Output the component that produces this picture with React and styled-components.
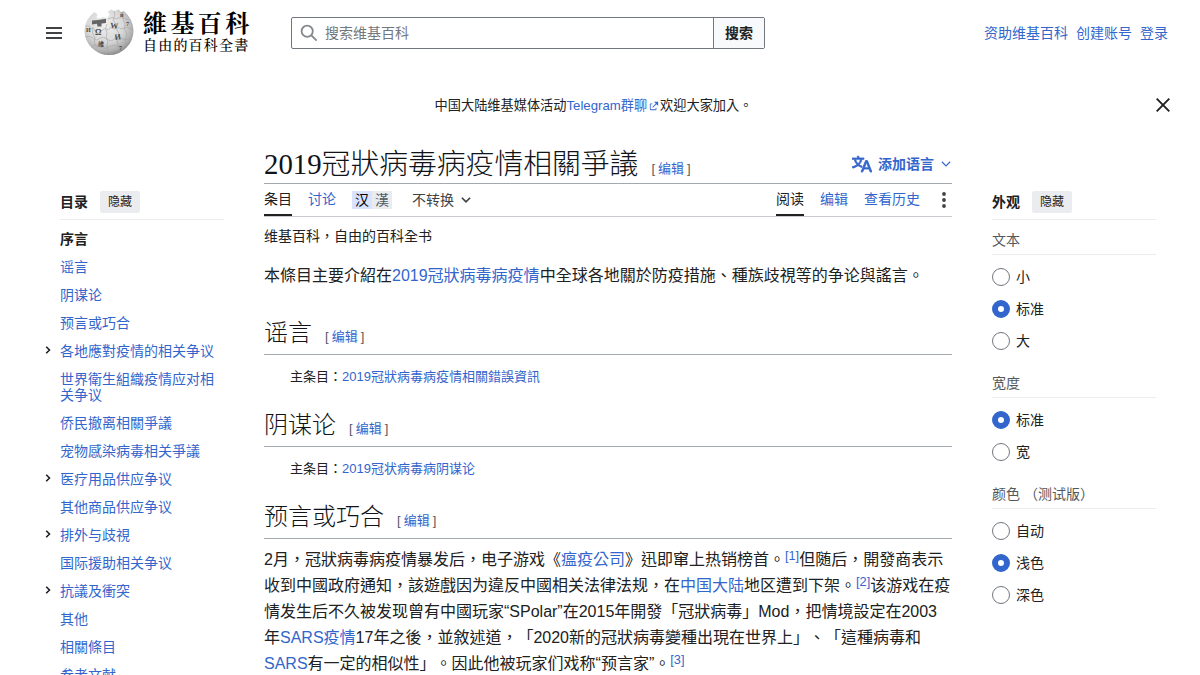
import React from "react";
import styled, { createGlobalStyle, css } from "styled-components";

const GlobalStyle = createGlobalStyle`
  * {
    box-sizing: border-box;
  }
  html, body {
    margin: 0;
    padding: 0;
    height: 675px;
    overflow: hidden;
    background: #fff;
  }
  body {
    font-family: "Liberation Sans", "Noto Sans CJK TC", sans-serif;
    font-size: 14px;
    line-height: 22px;
    color: #202122;
    text-spacing-trim: space-all;
    text-autospace: no-autospace;
  }
`;

const Link = styled.a`
  color: #36c;
  text-decoration: none;
  cursor: pointer;
`;

const Page = styled.div`
  width: 1200px;
  height: 675px;
  overflow: hidden;
`;

/* header */
const Header = styled.header`
  display: flex;
  align-items: center;
  height: 66px;
  padding: 0 32px 0 44px;
`;

const MenuButton = styled.div`
  display: flex;
  width: 20px;
  height: 20px;
  margin-right: 20px;
`;

const Brand = styled.div`
  display: flex;
  align-items: center;
  width: 207px;
  padding-bottom: 4px;
`;

const BrandText = styled.div`
  display: flex;
  flex-direction: column;
  margin-left: 9px;
  color: #000;
  font-family: "Noto Serif CJK TC", "Noto Sans CJK TC", serif;
  white-space: nowrap;
`;

const BrandName = styled.div`
  font-size: 24px;
  line-height: 27px;
  font-weight: 700;
  letter-spacing: 3.4px;
`;

const BrandTagline = styled.div`
  font-size: 14px;
  font-weight: 500;
  line-height: 19px;
  letter-spacing: 1.2px;
`;

const Search = styled.div`
  display: flex;
  width: 474px;
  height: 32px;
  border: 1px solid #72777d;
  border-radius: 2px;
`;

const SearchField = styled.div`
  display: flex;
  flex: 1;
  align-items: center;
  gap: 7px;
  padding-left: 8px;
  color: #72777d;
  line-height: 20px;
`;

const SearchButton = styled.div`
  width: 51px;
  border-left: 1px solid #72777d;
  background: #f8f9fa;
  font-weight: 700;
  line-height: 30px;
  text-align: center;
`;

const UserLinks = styled.nav`
  display: flex;
  gap: 8px;
  margin-left: auto;
  padding-bottom: 1px;
`;

/* banner */
const Banner = styled.div`
  display: flex;
  align-items: center;
  height: 78px;
  padding: 0 29px;
`;

const BannerText = styled.div`
  flex: 1;
  padding: 1px 0 0 3px;
  font-size: 13.2px;
  text-align: center;

  svg {
    margin: 0 1px 0 2px;
    vertical-align: -1px;
  }
`;

/* columns */
const Columns = styled.div`
  display: grid;
  grid-template-columns: 164px 688px 164px;
  column-gap: 40px;
  padding-left: 60px;
`;

const Sidebar = styled.aside`
  padding-top: 41px;
`;

const PanelHead = styled.div`
  display: flex;
  align-items: center;
  gap: 12px;
  height: 35px;
  padding-bottom: 1px;
  border-bottom: 1px solid #eaecf0;
  font-weight: 700;
`;

const HideButton = styled.span`
  width: 40px;
  height: 22px;
  border-radius: 2px;
  background: #eaecf0;
  font-size: 12px;
  font-weight: 400;
  text-align: center;
`;

const TocList = styled.ul`
  margin: 5px 0 0;
  padding: 0;
  list-style: none;
`;

const TocItem = styled.li`
  display: flex;
  margin-left: -20px;
  padding: 6px 0;
  line-height: 16px;

  ${props => props.$current && css`
    a {
      color: #202122;
      font-weight: 700;
    }
  `}
`;

const TocToggle = styled.span`
  display: flex;
  flex: none;
  width: 20px;
  padding: 3px 0 0 4px;
`;

/* article */
const Article = styled.main`
  padding-top: 1px;
`;

const TitleRow = styled.div`
  display: flex;
  align-items: flex-end;
  height: 39px;
  border-bottom: 1px solid #a2a9b1;
`;

const Title = styled.h1`
  margin: 0;
  color: #101418;
  font-family: "Liberation Serif", "Noto Sans CJK TC", serif;
  font-size: 28.8px;
  font-weight: 300;
  line-height: 38px;
  white-space: nowrap;
`;

const EditBox = styled.span`
  margin-left: ${props => props.$gap || 13}px;
  color: #54595d;
  font-family: "Liberation Sans", "Noto Sans CJK TC", sans-serif;
  font-size: 13px;
  font-weight: 400;
  white-space: nowrap;

  a {
    margin: 0 3px;
  }
`;

const TitleEdit = styled(EditBox)`
  padding-bottom: 3px;
`;

const LanguageButton = styled.div`
  display: flex;
  align-items: center;
  margin-left: auto;
  padding: 0 1px 8px 0;
  color: #36c;
  font-weight: 700;

  span {
    margin: 0 7px 0 6px;
  }
`;

const Tabs = styled.div`
  display: flex;
  height: 33px;
  border-bottom: 1px solid #c8ccd1;
`;

const Tab = styled.a`
  height: 32px;
  margin-right: 16px;
  color: ${props => (props.$active ? "#202122" : "#36c")};
  line-height: 31px;
  ${props => props.$active && "border-bottom: 2px solid #202122;"}
`;

const Variants = styled.div`
  display: flex;
  height: 18px;
  margin: 7px 20px 0 0;
  line-height: 18px;
`;

const Variant = styled.span`
  width: 20px;
  background: ${props => (props.$on ? "#d9e2ff" : "#eaecf0")};
  color: ${props => (props.$on ? "#000" : "#54595d")};
  text-align: center;
`;

const Convert = styled.div`
  display: flex;
  align-items: center;
  gap: 7px;
  color: #404244;
`;

const Views = styled.div`
  display: flex;
  margin-left: auto;
`;

const Tagline = styled.div`
  height: 20px;
  margin-top: 9px;
  line-height: 20px;
`;

const Paragraph = styled.p`
  margin: ${props => props.$top}px 0 0;
  font-size: 16px;
  line-height: 26px;
  white-space: nowrap;
`;

const Section = styled.h2`
  display: flex;
  align-items: baseline;
  height: 45px;
  margin: ${props => props.$top}px 0 0;
  border-bottom: 1px solid #a2a9b1;
  color: #101418;
  font-family: "Liberation Serif", "Noto Sans CJK TC", serif;
  font-size: 24px;
  font-weight: 300;
  line-height: 46px;
`;

const MainArticle = styled.div`
  height: 22px;
  margin-top: 11px;
  padding-left: 26px;
  font-size: 13px;
`;

const Ref = styled.sup`
  color: #36c;
  font-size: 12.8px;
  line-height: 1;
  vertical-align: 5px;
`;

/* appearance */
const OptionTitle = styled.div`
  height: 35px;
  margin-top: ${props => props.$top}px;
  border-bottom: 1px solid #eaecf0;
  color: #54595d;
  line-height: 40px;
`;

const Options = styled.div`
  display: flex;
  flex-direction: column;
  gap: 14px;
  padding-top: 13px;
`;

const Option = styled.div`
  display: flex;
  align-items: center;
  gap: 6px;
  height: 18px;
  line-height: 18px;
`;

const Radio = styled.span`
  width: 18px;
  height: 18px;
  border: ${props => (props.$checked ? "6px solid #36c" : "1px solid #72777d")};
  border-radius: 50%;
`;

const Globe = () => (
  <svg width="50" height="50" viewBox="0 0 50 50">
    <defs>
      <radialGradient id="globe" cx="0.42" cy="0.35" r="0.68">
        <stop offset="0" stopColor="#f0f0f0" />
        <stop offset="0.55" stopColor="#d8d8d8" />
        <stop offset="0.85" stopColor="#adadad" />
        <stop offset="1" stopColor="#808080" />
      </radialGradient>
    </defs>
    <path
      d="M10.5 6 Q1 13 .5 24.5 A24.5 24.5 0 0 0 49.5 24.5 Q49 13 40 5 L36.5 6 L35 3.6 L30 5 L27.5 3.4 L24 5.5 L25.5 9 L23 12 L19 11 L15.5 12.5 L12.5 11.5 L13.5 8.5 Z"
      fill="url(#globe)"
    />
    <path d="M8 14.5 L14 14 L22 12.8 L22 17 L17.5 17.5 L17.5 20.5 L13.5 20.5 L13 17.8 L8 18.5 Z" fill="#666" />
    <g fill="none" stroke="#a2a2a2" strokeWidth="0.6">
      <path d="M1.5 20 Q7 19 6 23 Q10 21 11 25 Q16 22 18 25 Q20 21 24 24 Q26 20 30 23 Q35 20 37 23 Q42 20 49 23" />
      <path d="M1 31 Q6 29 9 32 Q12 36 16 32 Q20 30 23 33 Q28 37 31 32 Q35 29 39 33 Q44 35 48 30" />
      <path d="M7 41 Q12 37 17 41 Q22 44 26 40 Q32 38 36 41 Q40 43 43 39" />
      <path d="M9 21 Q7 27 11 32 Q9 38 14 42 M23 18 Q20 23 23 27 Q21 32 24 36 Q21 42 26 48" />
      <path d="M30 5 Q32 9 29 14 Q34 19 33 24 Q37 29 33 34 Q36 40 33 46 M39 8 Q38 13 41 18 Q39 24 43 28 Q40 34 42 39" />
      <path d="M24 13 Q29 10 32 13 Q37 10 44 14" />
    </g>
    <g fill="#4a4a4a" fontFamily="Liberation Serif" fontWeight="700" fontSize="8">
      <text x="11" y="29">Ω</text>
      <text x="26" y="22" transform="rotate(5 26 22)">W</text>
      <text x="31" y="34" transform="rotate(-8 31 34)">И</text>
      <text x="2" y="26" fontSize="6">И</text>
      <text x="42" y="20" fontSize="6">7</text>
      <text x="36" y="11" fontSize="6">й</text>
      <text x="14" y="39.5" fontSize="6" fontFamily="Noto Sans CJK TC">維</text>
      <text x="35" y="44" fontSize="6">7</text>
    </g>
  </svg>
);

const ExternalIcon = () => (
  <svg width="10" height="10" viewBox="0 0 12 12" fill="#36c">
    <path d="M6 1h5v5L8.86 3.85 4.7 8 4 7.3l4.15-4.16zM2 3h2v1H2v6h6V8h1v2a1 1 0 0 1-1 1H2a1 1 0 0 1-1-1V4a1 1 0 0 1 1-1" />
  </svg>
);

const Chevron = ({ size = 8, color = "#202122", width = 1.6 }) => (
  <svg width={size} height={size} viewBox="0 0 8 8" fill="none" stroke={color} strokeWidth={width}>
    <path d="M.7 2.2 4 5.5l3.3-3.3" />
  </svg>
);

const Edit = ({ gap }) => (
  <EditBox $gap={gap}>
    [<Link>编辑</Link>]
  </EditBox>
);

const toc = [
  { text: "序言", current: true },
  { text: "谣言" },
  { text: "阴谋论" },
  { text: "预言或巧合" },
  { text: "各地應對疫情的相关争议", toggle: true },
  { text: "世界衛生組織疫情应对相关争议" },
  { text: "侨民撤离相關爭議" },
  { text: "宠物感染病毒相关爭議" },
  { text: "医疗用品供应争议", toggle: true },
  { text: "其他商品供应争议" },
  { text: "排外与歧視", toggle: true },
  { text: "国际援助相关争议" },
  { text: "抗議及衝突", toggle: true },
  { text: "其他" },
  { text: "相關條目" },
  { text: "参考文献" }
];

const appearance = [
  { title: "文本", options: ["小", "标准", "大"], checked: "标准", top: 0 },
  { title: "宽度", options: ["标准", "宽"], checked: "标准", top: 13 },
  { title: "颜色 （测试版）", options: ["自动", "浅色", "深色"], checked: "浅色", top: 13 }
];

const App = () => (
  <Page>
    <GlobalStyle />
    <Header>
      <MenuButton>
        <svg width="20" height="20" viewBox="0 0 20 20" fill="#404244">
          <path d="M2 4h16v2H2zm0 5h16v2H2zm0 5h16v2H2z" />
        </svg>
      </MenuButton>
      <Brand>
        <Globe />
        <BrandText>
          <BrandName>維基百科</BrandName>
          <BrandTagline>自由的百科全書</BrandTagline>
        </BrandText>
      </Brand>
      <Search>
        <SearchField>
          <svg width="18" height="18" viewBox="0 0 20 20" fill="none" stroke="#85898f" strokeWidth="2">
            <circle cx="8" cy="8" r="6.2" />
            <path d="m12.5 12.5 6 6" />
          </svg>
          搜索维基百科
        </SearchField>
        <SearchButton>搜索</SearchButton>
      </Search>
      <UserLinks>
        <Link>资助维基百科</Link>
        <Link>创建账号</Link>
        <Link>登录</Link>
      </UserLinks>
    </Header>

    <Banner>
      <BannerText>
        中国大陆维基媒体活动<Link>Telegram群聊<ExternalIcon /></Link>欢迎大家加入。
      </BannerText>
      <svg width="16" height="16" viewBox="0 0 16 16" stroke="#202122" strokeWidth="1.9">
        <path d="m1.7 1.7 12.6 12.6M14.3 1.7 1.7 14.3" />
      </svg>
    </Banner>

    <Columns>
      <Sidebar>
        <PanelHead>
          目录<HideButton>隐藏</HideButton>
        </PanelHead>
        <TocList>
          {toc.map(item => (
            <TocItem key={item.text} $current={item.current}>
              <TocToggle>
                {item.toggle && (
                  <svg width="8" height="8" viewBox="0 0 8 8" fill="none" stroke="#202122" strokeWidth="1.6">
                    <path d="M2.2.7 5.5 4 2.2 7.3" />
                  </svg>
                )}
              </TocToggle>
              <Link>{item.text}</Link>
            </TocItem>
          ))}
        </TocList>
      </Sidebar>

      <Article>
        <TitleRow>
          <Title>2019冠狀病毒病疫情相關爭議</Title>
          <TitleEdit>
            [<Link>编辑</Link>]
          </TitleEdit>
          <LanguageButton>
            <svg width="20" height="20" viewBox="0 0 20 20" fill="#36c" stroke="#36c" strokeWidth="0.8">
              <path d="M20 18h-1.44a.6.6 0 0 1-.4-.12.8.8 0 0 1-.23-.31L17 15h-5l-1 2.54a.8.8 0 0 1-.22.3.6.6 0 0 1-.4.14H9l4.55-11.47h1.89zm-3.53-4.31L14.89 9.5a12 12 0 0 1-.39-1.24q-.09.37-.19.69l-.19.56-1.58 4.19zm-6.3-1.58a13.4 13.4 0 0 1-2.91-1.41 11.46 11.46 0 0 0 2.81-5.37H12V4H7.31a4 4 0 0 0-.2-.56C6.87 2.79 6.6 2 6.6 2l-1.47.5s.4.89.6 1.5H0v1.33h2.15A11.23 11.23 0 0 0 5 10.7a17.2 17.2 0 0 1-5 2.1q.56.82.87 1.38a23.3 23.3 0 0 0 5.22-2.51 15.6 15.6 0 0 0 3.56 1.77zM3.63 5.33h4.91a8.1 8.1 0 0 1-2.45 4.45 9.1 9.1 0 0 1-2.46-4.45" />
            </svg>
            <span>添加语言</span>
            <Chevron size={10} color="#36c" width={0.9} />
          </LanguageButton>
        </TitleRow>
        <Tabs>
          <Tab $active>条目</Tab>
          <Tab>讨论</Tab>
          <Variants>
            <Variant $on>汉</Variant>
            <Variant>漢</Variant>
          </Variants>
          <Convert>
            不转换
            <Chevron size={10} color="#404244" width={1.4} />
          </Convert>
          <Views>
            <Tab $active>阅读</Tab>
            <Tab>编辑</Tab>
            <Tab>查看历史</Tab>
            <svg width="16" height="32" viewBox="0 0 16 32" fill="#404244">
              <circle cx="8" cy="10" r="1.9" />
              <circle cx="8" cy="16" r="1.9" />
              <circle cx="8" cy="22" r="1.9" />
            </svg>
          </Views>
        </Tabs>

        <Tagline>维基百科，自由的百科全书</Tagline>
        <Paragraph $top={17}>
          本條目主要介紹在<Link>2019冠狀病毒病疫情</Link>中全球各地關於防疫措施、種族歧視等的争论與謠言。
        </Paragraph>

        <Section $top={21}>
          谣言<Edit />
        </Section>
        <MainArticle>
          主条目：<Link>2019冠狀病毒病疫情相關錯誤資訊</Link>
        </MainArticle>

        <Section $top={14}>
          阴谋论<Edit />
        </Section>
        <MainArticle>
          主条目：<Link>2019冠状病毒病阴谋论</Link>
        </MainArticle>

        <Section $top={14}>
          预言或巧合<Edit />
        </Section>
        <Paragraph $top={8}>
          2月，冠狀病毒病疫情暴发后，电子游戏《<Link>瘟疫公司</Link>》迅即窜上热销榜首。<Ref>[1]</Ref>但随后，開發商表示
          <br />
          收到中國政府通知，該遊戲因为違反中國相关法律法规，在<Link>中国大陆</Link>地区遭到下架。<Ref>[2]</Ref>该游戏在疫
          <br />
          情发生后不久被发现曾有中國玩家“SPolar”在2015年開發「冠狀病毒」Mod，把情境設定在2003
          <br />
          年<Link>SARS疫情</Link>17年之後，並敘述道，「2020新的冠狀病毒變種出現在世界上」、「這種病毒和
          <br />
          <Link>SARS</Link>有一定的相似性」。因此他被玩家们戏称“预言家”。<Ref>[3]</Ref>
        </Paragraph>
      </Article>

      <Sidebar>
        <PanelHead>
          外观<HideButton>隐藏</HideButton>
        </PanelHead>
        {appearance.map(group => (
          <React.Fragment key={group.title}>
            <OptionTitle $top={group.top}>{group.title}</OptionTitle>
            <Options>
              {group.options.map(option => (
                <Option key={option}>
                  <Radio $checked={option === group.checked} />
                  {option}
                </Option>
              ))}
            </Options>
          </React.Fragment>
        ))}
      </Sidebar>
    </Columns>
  </Page>
);

export default App;
